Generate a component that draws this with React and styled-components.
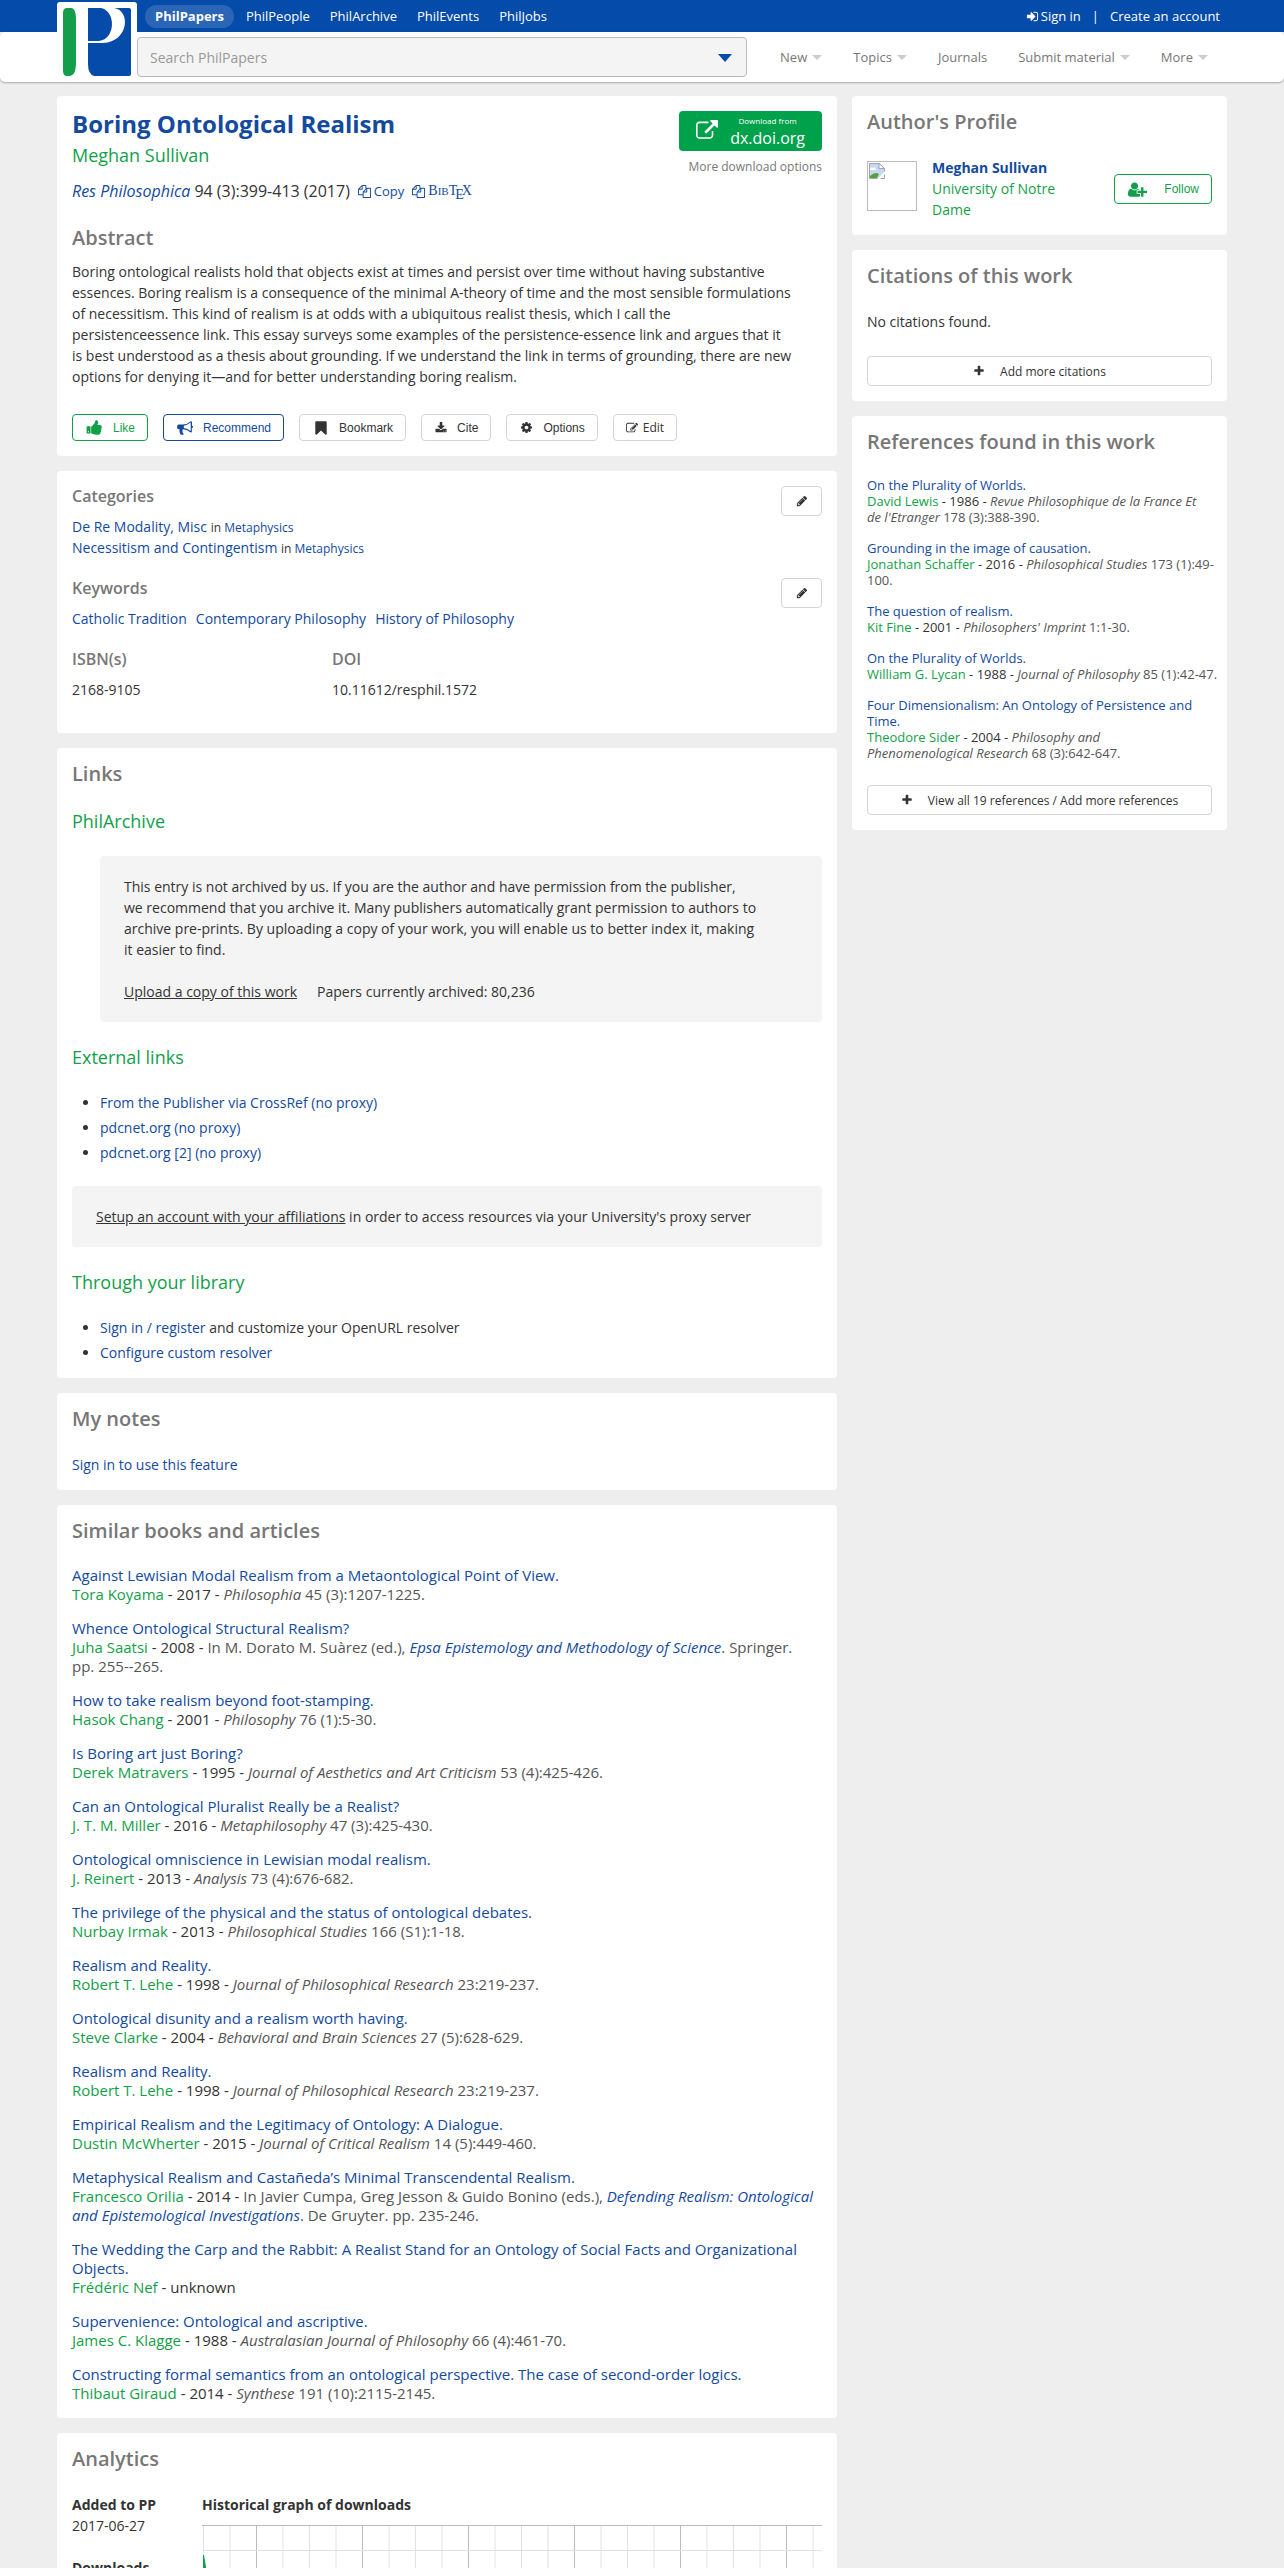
import React from "react";
import styled, { createGlobalStyle } from "styled-components";

const icons = {
    signIn: "M1312 896q0 26-19 45l-544 544q-19 19-45 19t-45-19-19-45v-288h-448q-26 0-45-19t-19-45v-384q0-26 19-45t45-19h448v-288q0-26 19-45t45-19 45 19l544 544q19 19 19 45zm352-352v704q0 119-84.5 203.500t-203.500 84.500h-320q-13 0-22.500-9.500t-9.500-22.500q0-4-1-20t-.5-26.500 3-23.500 10-19.500 20.500-6.500h320q66 0 113-47t47-113v-704q0-66-47-113t-113-47h-312l-11.500-1-11.500-3-8-5.500-7-9-2-13.500q0-4-1-20t-.5-26.500 3-23.500 10-19.500 20.500-6.500h320q119 0 203.500 84.500t84.500 203.500z",
    copy: "M1696 384q40 0 68 28t28 68v1216q0 40-28 68t-68 28h-960q-40 0-68-28t-28-68v-288h-544q-40 0-68-28t-28-68v-672q0-40 20-88t48-76l408-408q28-28 76-48t88-20h416q40 0 68 28t28 68v328q68-40 128-40h416zm-544 213l-299 299h299v-299zm-640-384l-299 299h299v-299zm196 647l316-316v-416h-384v416q0 40-28 68t-68 28h-416v640h512v-256q0-40 20-88t48-76zm956 804v-1152h-384v416q0 40-28 68t-68 28h-416v640h896z",
    external: "M1408 928v320q0 119-84.500 203.500t-203.500 84.500h-832q-119 0-203.500-84.500t-84.500-203.500v-832q0-119 84.500-203.500t203.500-84.500h704q14 0 23 9t9 23v64q0 14-9 23t-23 9h-704q-66 0-113 47t-47 113v832q0 66 47 113t113 47h832q66 0 113-47t47-113v-320q0-14 9-23t23-9h64q14 0 23 9t9 23zm384-864v512q0 26-19 45t-45 19-45-19l-176-176-652 652q-10 10-23 10t-23-10l-114-114q-10-10-10-23t10-23l652-652-176-176q-19-19-19-45t19-45 45-19h512q26 0 45 19t19 45z",
    like: "M320 1344q0-26-19-45t-45-19q-27 0-45.500 19t-18.500 45q0 27 18.500 45.500t45.500 18.500q26 0 45-18.500t19-45.500zm160-512v640q0 26-19 45t-45 19h-288q-26 0-45-19t-19-45v-640q0-26 19-45t45-19h288q26 0 45 19t19 45zm1184 0q0 86-55 149 15 44 15 76 3 76-43 137 17 56 0 117-15 57-54 94 9 112-49 181-64 76-197 78h-129q-66 0-144-15.500t-121.500-29-120.500-39.500q-123-43-158-44-26-1-45-19.500t-19-44.500v-641q0-25 18-43.500t43-20.500q24-2 76-59t101-121q68-87 101-120 18-18 31-48t17.500-48.500 13.500-60.500q7-39 12.500-61t19.500-52 34-50q19-19 45-19 46 0 82.500 10.500t60 26 40 40.500 24 45 12 50 5 45 .5 39q0 38-9.500 76t-19 60-27.500 56q-3 6-10 18t-11 22-8 24h277q78 0 135 57t57 135z",
    bullhorn: "M1664 640q53 0 90.500 37.500t37.500 90.500-37.500 90.500-90.500 37.500v384q0 52-38 90t-90 38q-417-347-812-380-58 19-91 66t-31 100.500 40 92.500q-20 33-23 65.500t6 58 33.500 55 48 50 61.500 50.500q-29 58-111.500 83t-168.500 11.500-113.500-55.500q-7-23-29.500-87.500t-32-94.500-23-89-15-101 3.500-98.500 22-110.500h-122q-66 0-113-47t-47-113v-192q0-66 47-113t113-47h480q435 0 896-384 52 0 90 38t38 90v384zm-128 604v-954q-394 302-768 343v270q377 42 768 341z",
    bookmark: "M1420 128q23 0 44 9 33 13 52.500 41t19.500 62v1289q0 34-19.500 62t-52.500 41q-19 8-44 8-48 0-83-32l-441-424-441 424q-36 33-83 33-23 0-44-9-33-13-52.500-41t-19.500-62v-1289q0-34 19.500-62t52.500-41q21-9 44-9h1048z",
    download: "M1344 1344q0-26-19-45t-45-19-45 19-19 45 19 45 45 19 45-19 19-45zm256 0q0-26-19-45t-45-19-45 19-19 45 19 45 45 19 45-19 19-45zm128-224v320q0 40-28 68t-68 28h-1472q-40 0-68-28t-28-68v-320q0-40 28-68t68-28h465l135 136q58 56 136 56t136-56l136-136h464q40 0 68 28t28 68zm-325-569q17 41-14 70l-448 448q-18 19-45 19t-45-19l-448-448q-31-29-14-70 17-39 59-39h256v-448q0-26 19-45t45-19h256q26 0 45 19t19 45v448h256q42 0 59 39z",
    cog: "M1152 896q0-106-75-181t-181-75-181 75-75 181 75 181 181 75 181-75 75-181zm512-109v222q0 12-8 23t-20 13l-185 28q-19 54-39 91 35 50 107 138 10 12 10 25t-9 23q-27 37-99 108t-94 71q-12 0-26-9l-138-108q-44 23-91 38-16 136-29 186-7 28-36 28h-222q-14 0-24.500-8.500t-11.500-21.500l-28-184q-49-16-90-37l-141 107q-10 9-25 9-14 0-25-11-126-114-165-168-7-10-7-23 0-12 8-23 15-21 51-66.500t54-70.500q-27-50-41-99l-183-27q-13-2-21-12.500t-8-23.500v-222q0-12 8-23t19-13l186-28q14-46 39-92-40-57-107-138-10-12-10-24 0-10 9-23 26-36 98.500-107.500t94.500-71.500q13 0 26 10l138 107q44-23 91-38 16-136 29-186 7-28 36-28h222q14 0 24.500 8.500t11.500 21.500l28 184q49 16 90 37l142-107q9-9 24-9 13 0 25 10 129 119 165 170 7 8 7 22 0 12-8 23-15 21-51 66.500t-54 70.500q26 50 41 98l183 28q13 2 21 12.500t8 23.500z",
    edit: "M888 1184l116-116-152-152-116 116v56h96v96h56zm440-720q-16-16-33 1l-350 350q-17 17-1 33t33-1l350-350q17-17 1-33zm80 594v190q0 119-84.500 203.500t-203.500 84.500h-832q-119 0-203.500-84.500t-84.500-203.500v-832q0-119 84.500-203.500t203.500-84.500h832q63 0 117 25 15 7 18 23 3 17-9 29l-49 49q-14 14-32 8-23-6-45-6h-832q-66 0-113 47t-47 113v832q0 66 47 113t113 47h832q66 0 113-47t47-113v-126q0-13 9-22l64-64q15-15 35-7t20 29zm-96-738l288 288-672 672h-288v-288zm444 132l-92 92-288-288 92-92q28-28 68-28t68 28l152 152q28 28 28 68t-28 68z",
    pencil: "M491 1536l91-91-235-235-91 91v107h128v128h107zm523-928q0-22-22-22-10 0-17 7l-542 542q-7 7-7 17 0 22 22 22 10 0 17-7l542-542q7-7 7-17zm-54-192l416 416-832 832h-416v-416zm683 96q0 53-37 90l-166 166-416-416 166-165q36-38 90-38 53 0 91 38l235 234q37 39 37 91z",
    plus: "M1600 736v192q0 40-28 68t-68 28h-416v416q0 40-28 68t-68 28h-192q-40 0-68-28t-28-68v-416h-416q-40 0-68-28t-28-68v-192q0-40 28-68t68-28h416v-416q0-40 28-68t68-28h192q40 0 68 28t28 68v416h416q40 0 68 28t28 68z",
    userPlus: "M704 896q-159 0-271.500-112.500t-112.500-271.500 112.500-271.500 271.500-112.500 271.500 112.500 112.500 271.500-112.500 271.500-271.500 112.500zm960 128h352q13 0 22.500 9.500t9.500 22.500v192q0 13-9.500 22.500t-22.500 9.500h-352v352q0 13-9.500 22.500t-22.500 9.500h-192q-13 0-22.500-9.500t-9.500-22.500v-352h-352q-13 0-22.500-9.500t-9.500-22.500v-192q0-13 9.500-22.500t22.500-9.500h352v-352q0-13 9.500-22.500t22.500-9.500h192q13 0 22.500 9.500t9.500 22.500v352zm-736 224q0 52 38 90t90 38h256v238q-68 50-171 50h-874q-121 0-194-69t-73-190q0-53 3.500-103.500t14-109 26.500-108.500 43-97.500 62-81 85.500-53.500 111.500-20q19 0 39 17 79 61 154.500 91.500t164.500 30.500 164.500-30.500 154.500-91.500q20-17 39-17 132 0 217 96h-223q-52 0-90 38t-38 90v192z",
};

const Icon = ({ name, size = 14, wide }) => (
    <Glyph viewBox={wide ? "0 0 2048 1792" : "0 0 1792 1792"} width={wide ? size + 2 : size} height={size} aria-hidden="true">
        <path d={icons[name]} />
    </Glyph>
);

const navItems = [
    { label: "New", caret: true },
    { label: "Topics", caret: true },
    { label: "Journals" },
    { label: "Submit material", caret: true },
    { label: "More", caret: true },
];

const references = [
    { title: "On the Plurality of Worlds.", author: "David Lewis", year: "1986", pub: "Revue Philosophique de la France Et de\u00a0l'Etranger", rest: " 178 (3):388-390." },
    { title: "Grounding in the image of causation.", author: "Jonathan Schaffer", year: "2016", pub: "Philosophical Studies", rest: " 173 (1):49-100." },
    { title: "The question of realism.", author: "Kit Fine", year: "2001", pub: "Philosophers' Imprint", rest: " 1:1-30." },
    { title: "On the Plurality of Worlds.", author: "William G. Lycan", year: "1988", pub: "Journal of Philosophy", rest: " 85 (1):42-47." },
    { title: "Four Dimensionalism: An Ontology of Persistence and Time.", author: "Theodore Sider", year: "2004", pub: "Philosophy and Phenomenological\u00a0Research", rest: " 68 (3):642-647." },
];

const similar = [
    { title: "Against Lewisian Modal Realism from a Metaontological Point of View.", author: "Tora Koyama", year: "2017", pub: "Philosophia", rest: " 45 (3):1207-1225." },
    { title: "Whence Ontological Structural Realism?", author: "Juha Saatsi", year: "2008", before: "In M. Dorato M. Suàrez (ed.), ", book: "Epsa Epistemology and Methodology of Science", rest: ". Springer. pp.\u00a0255--265." },
    { title: "How to take realism beyond foot-stamping.", author: "Hasok Chang", year: "2001", pub: "Philosophy", rest: " 76 (1):5-30." },
    { title: "Is Boring art just Boring?", author: "Derek Matravers", year: "1995", pub: "Journal of Aesthetics and Art Criticism", rest: " 53 (4):425-426." },
    { title: "Can an Ontological Pluralist Really be a Realist?", author: "J. T. M. Miller", year: "2016", pub: "Metaphilosophy", rest: " 47 (3):425-430." },
    { title: "Ontological omniscience in Lewisian modal realism.", author: "J. Reinert", year: "2013", pub: "Analysis", rest: " 73 (4):676-682." },
    { title: "The privilege of the physical and the status of ontological debates.", author: "Nurbay Irmak", year: "2013", pub: "Philosophical Studies", rest: " 166 (S1):1-18." },
    { title: "Realism and Reality.", author: "Robert T. Lehe", year: "1998", pub: "Journal of Philosophical Research", rest: " 23:219-237." },
    { title: "Ontological disunity and a realism worth having.", author: "Steve Clarke", year: "2004", pub: "Behavioral and Brain Sciences", rest: " 27 (5):628-629." },
    { title: "Realism and Reality.", author: "Robert T. Lehe", year: "1998", pub: "Journal of Philosophical Research", rest: " 23:219-237." },
    { title: "Empirical Realism and the Legitimacy of Ontology: A Dialogue.", author: "Dustin McWherter", year: "2015", pub: "Journal of Critical Realism", rest: " 14 (5):449-460." },
    { title: "Metaphysical Realism and Castañeda’s Minimal Transcendental Realism.", author: "Francesco Orilia", year: "2014", before: "In Javier Cumpa, Greg Jesson & Guido Bonino (eds.), ", book: "Defending Realism: Ontological and Epistemological Investigations", rest: ". De Gruyter. pp. 235-246." },
    { title: "The Wedding the Carp and the Rabbit: A Realist Stand for an Ontology of Social Facts and Organizational Objects.", author: "Frédéric Nef", year: "unknown" },
    { title: "Supervenience: Ontological and ascriptive.", author: "James C. Klagge", year: "1988", pub: "Australasian Journal of Philosophy", rest: " 66 (4):461-70." },
    { title: "Constructing formal semantics from an ontological perspective. The case of second-order logics.", author: "Thibaut Giraud", year: "2014", pub: "Synthese", rest: " 191 (10):2115-2145." },
];

const Citation = ({ item }) => (
    <Entry>
        <a href="#rec">{item.title}</a>
        <br />
        <Green href="#author">{item.author}</Green> - {item.year}
        {item.rest && " - "}
        <Pub>
            {item.before}
            {item.book && <a href="#book"><em>{item.book}</em></a>}
            {item.pub && <em>{item.pub}</em>}
            {item.rest}
        </Pub>
    </Entry>
);

const Logo = () => (
    <svg viewBox="0 0 80 76" width="80" height="76" role="img" aria-label="PhilPapers">
        <rect width="80" height="76" rx="3" fill="#fff" />
        <path d="M10 6h4c4 0 5 6 5 12v42c0 9-2 14-7 14h-2q-4 0-4-5V11q0-5 4-5z" fill="#139f49" />
        <path d="M31 6h41q2 0 2 2v64q0 2-2 2H37q-6-2-6-12z" fill="#054ba9" />
        <path d="M44 6c15 3 15 31-2 33H31v2h15c26-1 28-33 11-35z" fill="#fff" />
    </svg>
);

// grid spacing is one quarter, darker lines mark the years
const DownloadsGraph = () => (
    <svg viewBox="0 0 620 200" width="100%" aria-label="Historical graph of downloads">
        {Array.from({ length: 24 }, (_, i) => (
            <line key={i} x1={1.5 + i * 26.5} x2={1.5 + i * 26.5} y1="0" y2="200" stroke={i % 4 === 2 ? "#bbb" : "#e2e2e2"} />
        ))}
        {[25.5, 50.5, 75.5, 100.5, 125.5, 150.5, 175.5].map((y) => (
            <line key={y} x1="0" x2="620" y1={y} y2={y} stroke="#e2e2e2" />
        ))}
        <line x1="0" x2="620" y1="0.5" y2="0.5" stroke="#bbb" />
        <path d="M1 200V30h1l3 18 14 152z" fill="#139f49" />
    </svg>
);

const App = () => {
    return (
        <>
            <GlobalStyle />
            <header>
                <TopBar>
                    <TopInner>
                        <LogoLink href="#home"><Logo /></LogoLink>
                        <SiteLink href="#papers" $active>PhilPapers</SiteLink>
                        <SiteLink href="#people">PhilPeople</SiteLink>
                        <SiteLink href="#archive">PhilArchive</SiteLink>
                        <SiteLink href="#events">PhilEvents</SiteLink>
                        <SiteLink href="#jobs">PhilJobs</SiteLink>
                        <Account>
                            <a href="#signin"><Icon name="signIn" size={13} /> Sign in</a>
                            <span>|</span>
                            <a href="#create">Create an account</a>
                        </Account>
                    </TopInner>
                </TopBar>
                <MenuBar>
                    <MenuInner>
                        <SearchBox>
                            <SearchInput type="text" placeholder="Search PhilPapers" aria-label="Search PhilPapers" />
                            <SearchToggle type="button" aria-label="Search options"><Caret $blue /></SearchToggle>
                        </SearchBox>
                        <Menu>
                            {navItems.map((item) => (
                                <MenuLink key={item.label} href="#menu">
                                    {item.label}
                                    {item.caret && <Caret />}
                                </MenuLink>
                            ))}
                        </Menu>
                    </MenuInner>
                </MenuBar>
            </header>

            <Page>
                <Column as="main">
                    <Card>
                        <EntryHead>
                            <div>
                                <Title>Boring Ontological Realism</Title>
                                <AuthorName href="#author">Meghan Sullivan</AuthorName>
                                <PubInfo>
                                    <span><a href="#journal"><em>Res Philosophica</em></a> 94 (3):399-413 (2017)</span>
                                    <CopyLink href="#copy"><Icon name="copy" size={13} /> Copy</CopyLink>
                                    <CopyLink href="#bibtex">
                                        <Icon name="copy" size={13} />
                                        <BibTex>B<small>IB</small>T<sub>E</sub>X</BibTex>
                                    </CopyLink>
                                </PubInfo>
                            </div>
                            <Downloads>
                                <DownloadButton href="#download">
                                    <Icon name="external" size={22} />
                                    <span><small>Download from</small>dx.doi.org</span>
                                </DownloadButton>
                                <MoreOptions href="#more">More download options</MoreOptions>
                            </Downloads>
                        </EntryHead>
                        <AbstractHeading>Abstract</AbstractHeading>
                        <Abstract>
                            Boring ontological realists hold that objects exist at times and persist over time without having substantive essences. Boring realism is a consequence of the minimal A-theory of time and the most sensible formulations of&nbsp;necessitism. This kind of realism is at odds with a ubiquitous realist thesis, which I call the persistenceessence&nbsp;link. This essay surveys some examples of the persistence-essence link and argues that it is&nbsp;best understood as a thesis about grounding. If we understand the link in terms of grounding, there are new options for denying it—and for better understanding boring realism.
                        </Abstract>
                        <Actions>
                            <ActionButton $color="#139f49"><Icon name="like" size={17} />Like</ActionButton>
                            <ActionButton $color="#134a9e"><Icon name="bullhorn" size={16} />Recommend</ActionButton>
                            <ActionButton><Icon name="bookmark" size={16} />Bookmark</ActionButton>
                            <ActionButton><Icon name="download" size={12} />Cite</ActionButton>
                            <ActionButton><Icon name="cog" size={13} />Options</ActionButton>
                            <EditButton><Icon name="edit" size={12} />Edit</EditButton>
                        </Actions>
                    </Card>

                    <Card>
                        <EditableRow>
                            <div>
                                <SmallHeading>Categories</SmallHeading>
                                <div><a href="#cat">De Re Modality, Misc</a> <InArea>in <a href="#area">Metaphysics</a></InArea></div>
                                <div><a href="#cat">Necessitism and Contingentism</a> <InArea>in <a href="#area">Metaphysics</a></InArea></div>
                            </div>
                            <PencilButton aria-label="Edit categories"><Icon name="pencil" size={12} /></PencilButton>
                        </EditableRow>
                        <EditableRow>
                            <div>
                                <SmallHeading>Keywords</SmallHeading>
                                <Keywords>
                                    <a href="#kw">Catholic Tradition</a>
                                    <a href="#kw">Contemporary Philosophy</a>
                                    <a href="#kw">History of Philosophy</a>
                                </Keywords>
                            </div>
                            <PencilButton aria-label="Edit keywords"><Icon name="pencil" size={12} /></PencilButton>
                        </EditableRow>
                        <Ids>
                            <div>
                                <SmallHeading>ISBN(s)</SmallHeading>
                                2168-9105
                            </div>
                            <div>
                                <SmallHeading>DOI</SmallHeading>
                                10.11612/resphil.1572
                            </div>
                        </Ids>
                    </Card>

                    <Card>
                        <Heading>Links</Heading>
                        <GreenHeading>PhilArchive</GreenHeading>
                        <Well $indent>
                            This entry is not archived by us. If you are the author and have permission from the publisher, we&nbsp;recommend that you archive it. Many publishers automatically grant permission to authors to archive pre-prints. By uploading a copy of your work, you will enable us to better index it, making it&nbsp;easier to find.
                            <Upload>
                                <Underlined href="#upload">Upload a copy of this work</Underlined>
                                <span>Papers currently archived: 80,236</span>
                            </Upload>
                        </Well>
                        <GreenHeading>External links</GreenHeading>
                        <LinkList>
                            <li><a href="#crossref">From the Publisher via CrossRef (no proxy)</a></li>
                            <li><a href="#pdcnet">pdcnet.org (no proxy)</a></li>
                            <li><a href="#pdcnet2">pdcnet.org [2] (no proxy)</a></li>
                        </LinkList>
                        <Well>
                            <Underlined href="#setup">Setup an account with your affiliations</Underlined> in order to access resources via your University's proxy server
                        </Well>
                        <GreenHeading>Through your library</GreenHeading>
                        <LinkList>
                            <li><a href="#register">Sign in / register</a> and customize your OpenURL resolver</li>
                            <li><a href="#resolver">Configure custom resolver</a></li>
                        </LinkList>
                    </Card>

                    <Card>
                        <Heading>My notes</Heading>
                        <NotesLink href="#signin">Sign in to use this feature</NotesLink>
                    </Card>

                    <Card>
                        <Heading>Similar books and articles</Heading>
                        <EntryList>
                            {similar.map((item, i) => <Citation key={i} item={item} />)}
                        </EntryList>
                    </Card>

                    <Card>
                        <Heading>Analytics</Heading>
                        <Analytics>
                            <div>
                                <Stat><b>Added to PP</b><br />2017-06-27</Stat>
                                <Stat><b>Downloads</b></Stat>
                            </div>
                            <Graph>
                                <b>Historical graph of downloads</b>
                                <DownloadsGraph />
                            </Graph>
                        </Analytics>
                    </Card>
                </Column>

                <Column as="aside">
                    <Card>
                        <Heading>Author's Profile</Heading>
                        <Profile>
                            <Avatar>
                                <svg viewBox="0 0 16 16" width="16" height="16" aria-hidden="true">
                                    <path d="M.5.5h10l5 5v4l-7 6h-8z" fill="#c6d8f5" stroke="#a5a5a5" />
                                    <path d="M1 6q1-3 3-1 3-2 3 2H1z" fill="#fff" />
                                    <path d="M1 15v-2q5-5 9-2l-2 4z" fill="#58a03c" />
                                    <path d="M10 .5v5h5.500z" fill="#fff" stroke="#a5a5a5" />
                                    <path d="M15.500 11v4.500H11z" fill="#fff" stroke="#a5a5a5" />
                                    <path d="M16 8l-8 8h3l5-5z" fill="#fff" />
                                </svg>
                            </Avatar>
                            <ProfileText>
                                <a href="#author"><b>Meghan Sullivan</b></a>
                                <Green href="#inst">University of Notre Dame</Green>
                            </ProfileText>
                            <FollowButton><Icon name="userPlus" size={17} wide />Follow</FollowButton>
                        </Profile>
                    </Card>

                    <Card>
                        <Heading>Citations of this work</Heading>
                        <NoCitations>No citations found.</NoCitations>
                        <WideButton><Icon name="plus" size={12} />Add more citations</WideButton>
                    </Card>

                    <Card>
                        <Heading>References found in this work</Heading>
                        <EntryList $small>
                            {references.map((item, i) => <Citation key={i} item={item} />)}
                        </EntryList>
                        <WideButton><Icon name="plus" size={12} />View all 19 references / Add more references</WideButton>
                    </Card>
                </Column>
            </Page>
        </>
    );
};

const GlobalStyle = createGlobalStyle`
    * {
        box-sizing: border-box;
    }
    body {
        margin: 0;
        background: #eee;
        color: #333;
        font-family: "Open Sans", "Noto Sans", sans-serif;
        font-size: 14px;
        line-height: 21px;
    }
    h1, h2, h3, p, ul {
        margin: 0;
        padding: 0;
    }
    a {
        color: #134a9e;
        text-decoration: none;
    }
    button {
        cursor: pointer;
    }
`;
const Glyph = styled.svg`
    fill: currentColor;
    flex-shrink: 0;
`;
const TopBar = styled.div`
    background: #054ba9;
`;
const TopInner = styled.div`
    position: relative;
    display: flex;
    align-items: center;
    gap: 4px;
    max-width: 1170px;
    height: 32px;
    margin: 0 auto;
    padding-left: 88px;
    font-size: 13px;
`;
const LogoLink = styled.a`
    position: absolute;
    top: 2px;
    left: 0;
    line-height: 0;
`;
const SiteLink = styled.a`
    color: #fff;
    padding: 0 ${(props) => (props.$active ? "10px" : "8px")};
    line-height: 23px;
    border-radius: 12px;
    font-weight: ${(props) => (props.$active ? 700 : 400)};
    background: ${(props) => (props.$active ? "#2b66b6" : "transparent")};
`;
const Account = styled.div`
    display: flex;
    gap: 11px;
    margin-left: auto;
    padding-right: 7px;
    color: #fff;
    a {
        display: flex;
        align-items: center;
        gap: 2px;
        color: #fff;
    }
`;
const MenuBar = styled.div`
    background: #fff;
    border-radius: 5px;
    box-shadow: 0 1px 2px rgba(0, 0, 0, 0.3);
`;
const MenuInner = styled.div`
    display: flex;
    align-items: center;
    max-width: 1170px;
    height: 50px;
    margin: 0 auto;
    padding-left: 80px;
`;
const SearchBox = styled.div`
    display: flex;
    flex: 1;
    height: 40px;
    border: 1px solid #bbb;
    border-radius: 4px;
    background: #f4f4f4;
`;
const SearchInput = styled.input`
    flex: 1;
    min-width: 0;
    border: 0;
    padding: 0 12px;
    background: transparent;
    font-family: inherit;
    font-size: 14px;
    &::placeholder {
        color: #999;
    }
`;
const SearchToggle = styled.button`
    border: 0;
    padding: 0 14px;
    background: transparent;
`;
const Caret = styled.span`
    display: inline-block;
    border: solid transparent;
    border-width: ${(props) => (props.$blue ? "8px 7px 0" : "5px 5px 0")};
    border-top-color: ${(props) => (props.$blue ? "#054ba9" : "#ccc")};
`;
const Menu = styled.nav`
    display: flex;
    gap: 31px;
    padding: 0 19px 0 33px;
`;
const MenuLink = styled.a`
    display: flex;
    align-items: center;
    gap: 5px;
    color: #777;
    font-size: 13px;
`;
const Page = styled.div`
    display: grid;
    grid-template-columns: minmax(0, 780fr) minmax(0, 375fr);
    gap: 15px;
    max-width: 1170px;
    margin: 14px auto;
`;
const Column = styled.div`
    display: flex;
    flex-direction: column;
    gap: 15px;
`;
const Card = styled.section`
    padding: 15px;
    background: #fff;
    border-radius: 4px;
`;
const EntryHead = styled.div`
    display: flex;
    justify-content: space-between;
`;
const Title = styled.h1`
    color: #134a9e;
    font-size: 24px;
    line-height: 26px;
`;
const AuthorName = styled.a`
    display: block;
    margin: 6px 0 12px;
    color: #139f49;
    font-size: 18px;
    line-height: 24px;
`;
const PubInfo = styled.div`
    display: flex;
    align-items: center;
    gap: 8px;
    font-size: 16px;
    line-height: 24px;
`;
const CopyLink = styled.a`
    display: flex;
    align-items: center;
    gap: 3px;
    font-size: 13px;
`;
const BibTex = styled.span`
    font-family: "Liberation Serif", serif;
    font-size: 14px;
    small {
        font-size: 11px;
    }
    sub {
        margin: 0 -2px;
        font-size: 14px;
        line-height: 0;
    }
`;
const Downloads = styled.div`
    text-align: right;
`;
const DownloadButton = styled.a`
    display: flex;
    align-items: center;
    gap: 12px;
    height: 40px;
    padding: 0 17px;
    border-radius: 4px;
    background: #00a14b;
    color: #fff;
    font-size: 16px;
    line-height: 20px;
    text-align: center;
    small {
        display: block;
        font-size: 8px;
        line-height: 14px;
    }
`;
const MoreOptions = styled.a`
    display: block;
    margin-top: 5px;
    color: #777;
    font-size: 12px;
`;
const Heading = styled.h2`
    margin-bottom: 24px;
    color: #777;
    font-size: 20px;
    font-weight: 600;
    line-height: 22px;
`;
const AbstractHeading = styled(Heading)`
    margin: 24px 0 12px;
`;
const SmallHeading = styled.h3`
    margin-bottom: 10px;
    color: #777;
    font-size: 16px;
    font-weight: 600;
    line-height: 20px;
`;
const GreenHeading = styled.h3`
    margin-bottom: 23px;
    color: #139f49;
    font-size: 18px;
    font-weight: 400;
    line-height: 24px;
`;
const Abstract = styled.p`
    margin-bottom: 27px;
`;
const Actions = styled.div`
    display: flex;
    gap: 15px;
`;
const Button = styled.button`
    display: flex;
    align-items: center;
    justify-content: center;
    border: 1px solid #d5d5d5;
    border-radius: 4px;
    background: #fff;
    color: #333;
    font-family: inherit;
    font-size: 12px;
`;
const ActionButton = styled(Button)`
    gap: 10px;
    height: 27px;
    padding: 0 12px 0 13px;
    font-family: "Liberation Sans", Arial, sans-serif;
    color: ${(props) => props.$color || "#333"};
    border-color: ${(props) => props.$color || "#d5d5d5"};
`;
const EditButton = styled(Button)`
    gap: 5px;
    height: 27px;
    padding: 0 12px;
`;
const EditableRow = styled.div`
    display: flex;
    justify-content: space-between;
    align-items: flex-start;
    margin-bottom: 20px;
`;
const PencilButton = styled(Button)`
    width: 41px;
    height: 30px;
    padding: 0;
`;
const InArea = styled.span`
    font-size: 12px;
    line-height: 1;
`;
const Keywords = styled.div`
    display: flex;
    gap: 9px;
`;
const Ids = styled.div`
    display: grid;
    grid-template-columns: 260px 1fr;
    padding-bottom: 18px;
`;
const Well = styled.div`
    margin: 0 0 23px ${(props) => (props.$indent ? "28px" : "0")};
    padding: 20px 24px;
    border-radius: 4px;
    background: #f4f4f4;
`;
const Upload = styled.div`
    display: flex;
    gap: 20px;
    margin-top: 21px;
`;
const Underlined = styled.a`
    color: #333;
    text-decoration: underline;
`;
const LinkList = styled.ul`
    margin-bottom: 23px;
    padding-left: 28px;
    li {
        margin-bottom: 4px;
    }
    &:last-child,
    &:last-child li:last-child {
        margin-bottom: 0;
    }
`;
const NotesLink = styled.a`
    display: block;
`;
const EntryList = styled.ul`
    margin: ${(props) => (props.$small ? "0 -10px 24px 0" : "0")};
    list-style: none;
    font-size: ${(props) => (props.$small ? "13px" : "15px")};
    line-height: ${(props) => (props.$small ? "16px" : "19px")};
`;
const Entry = styled.li`
    margin-bottom: 15px;
    &:last-child {
        margin-bottom: 0;
    }
`;
const Green = styled.a`
    color: #139f49;
`;
const Pub = styled.span`
    color: #555;
`;
const Profile = styled.div`
    display: flex;
    align-items: flex-start;
    gap: 15px;
`;
const Avatar = styled.div`
    width: 50px;
    height: 50px;
    margin-top: 4px;
    padding: 1px;
    border: 1px solid #bbb;
    line-height: 0;
`;
const ProfileText = styled.div`
    display: flex;
    flex: 1;
    flex-direction: column;
    padding-right: 20px;
`;
const FollowButton = styled(ActionButton).attrs({ $color: "#139f49" })`
    gap: 17px;
    height: 30px;
    margin-top: 17px;
`;
const NoCitations = styled.p`
    margin-bottom: 24px;
`;
const WideButton = styled(Button)`
    gap: 15px;
    width: 100%;
    height: 30px;
`;
const Analytics = styled.div`
    display: grid;
    grid-template-columns: 130px 1fr;
`;
const Stat = styled.div`
    margin-bottom: 21px;
`;
const Graph = styled.div`
    svg {
        display: block;
        margin-top: 10px;
    }
`;

export default App;
